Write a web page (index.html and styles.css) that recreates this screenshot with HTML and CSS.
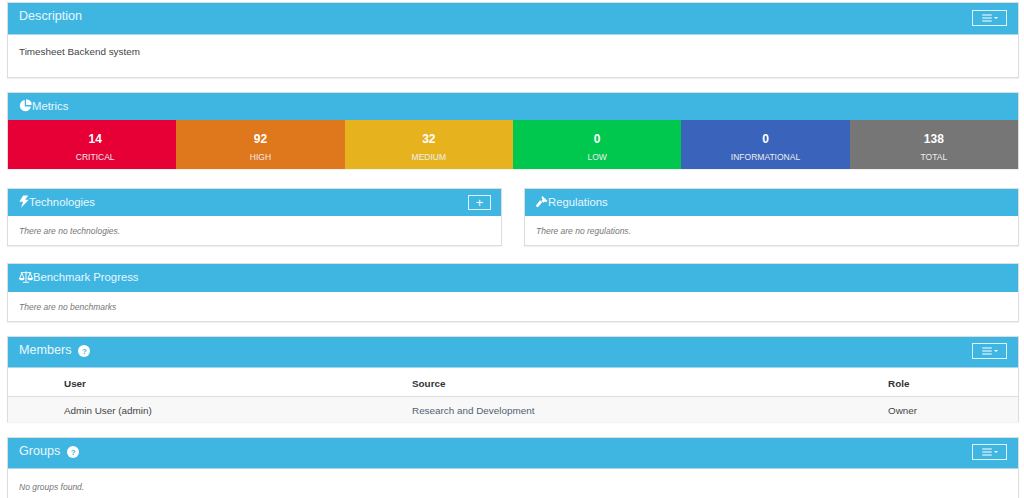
FILE: index.html
```html
<!DOCTYPE html>
<html lang="en">
<head>
<meta charset="utf-8">
<title>Timesheet Backend system</title>
<link rel="stylesheet" href="styles.css">
</head>
<body>
<svg class="sprite" width="0" height="0" aria-hidden="true">
  <symbol id="bars" viewBox="0 0 12 10"><path d="M0 0.5h12v1.4H0zM0 4.3h12v1.4H0zM0 8.1h12v1.4H0z" fill="currentColor"/></symbol>
</svg>
<main class="page">
  <section class="panel panel-description">
    <header class="heading heading-lg">
      <h2 class="title title-lg title-top">Description</h2>
      <button class="tool tool-menu" type="button"><svg class="bars"><use href="#bars"/></svg><span class="caret"></span></button>
    </header>
    <div class="body-description">Timesheet Backend system</div>
  </section>

  <section class="panel panel-metrics">
    <header class="heading heading-sm">
      <h3 class="title"><svg class="icon icon-pie" viewBox="0 0 14 14"><path d="M6.2 1.2A6 6 0 1 0 12.8 8H6.2z" fill="currentColor"/><path d="M7.6 0.2a6.2 6.2 0 0 1 6.2 6.2H7.6z" fill="currentColor"/></svg>Metrics</h3>
    </header>
    <div class="metrics">
      <div class="metric critical"><b>14</b><span>CRITICAL</span></div>
      <div class="metric high"><b>92</b><span>HIGH</span></div>
      <div class="metric medium"><b>32</b><span>MEDIUM</span></div>
      <div class="metric low"><b>0</b><span>LOW</span></div>
      <div class="metric info"><b>0</b><span>INFORMATIONAL</span></div>
      <div class="metric total"><b>138</b><span>TOTAL</span></div>
    </div>
  </section>

  <div class="split">
    <section class="panel">
      <header class="heading heading-sm">
        <h3 class="title"><svg class="icon icon-bolt" viewBox="0 0 11 14"><path d="M4.6 0.3h5.6L6.8 5h3.9L2.3 13.8 4.4 7.4H0.4z" fill="currentColor"/></svg>Technologies</h3>
        <button class="tool tool-add" type="button">+</button>
      </header>
      <p class="empty">There are no technologies.</p>
    </section>
    <section class="panel">
      <header class="heading heading-sm">
        <h3 class="title"><svg class="icon icon-gavel" viewBox="0 0 14 14"><path d="M7 0.4l6.4 5.6-1.8 1.9-1.2-1-1.5 1.6-2.7-2.4 1.5-1.7-1.2-1.1zM4.7 5.4l2.6 2.4L2.8 13a1.5 1.5 0 0 1-2.2-2.1z" fill="currentColor"/></svg>Regulations</h3>
      </header>
      <p class="empty">There are no regulations.</p>
    </section>
  </div>

  <section class="panel panel-bench">
    <header class="heading heading-sm">
      <h3 class="title"><svg class="icon icon-scale" viewBox="0 0 16 14"><path d="M2 2h12M8 .5v12M4.5 13h7M3.2 2.4.9 8.2M3.2 2.4l2.3 5.8M12.8 2.4l-2.3 5.8M12.8 2.4l2.3 5.8" fill="none" stroke="currentColor" stroke-width="1.1"/><path d="M0 8h6.4a3.2 2.8 0 0 1-6.4 0zM9.6 8H16a3.2 2.8 0 0 1-6.4 0z" fill="currentColor"/></svg>Benchmark Progress</h3>
    </header>
    <p class="empty">There are no benchmarks</p>
  </section>

  <section class="panel panel-members">
    <header class="heading heading-lg">
      <h2 class="title title-lg">Members <span class="help">?</span></h2>
      <button class="tool tool-menu" type="button"><svg class="bars"><use href="#bars"/></svg><span class="caret"></span></button>
    </header>
    <table class="table">
      <thead>
        <tr><th class="col-user">User</th><th class="col-source">Source</th><th>Role</th></tr>
      </thead>
      <tbody>
        <tr><td class="col-user">Admin User (admin)</td><td class="col-source"><a href="#">Research and Development</a></td><td>Owner</td></tr>
      </tbody>
    </table>
  </section>

  <section class="panel panel-groups">
    <header class="heading heading-lg">
      <h2 class="title title-lg">Groups <span class="help">?</span></h2>
      <button class="tool tool-menu" type="button"><svg class="bars"><use href="#bars"/></svg><span class="caret"></span></button>
    </header>
    <p class="empty empty-groups">No groups found.</p>
  </section>
</main>
</body>
</html>
```
FILE: styles.css
```css
* { box-sizing: border-box; }
html, body { margin: 0; height: 498px; overflow: hidden; background: #fff; }
body { font-family: "Liberation Sans", Arial, sans-serif; font-size: 10px; color: #444; }
.sprite { position: absolute; }
.page { padding: 2px 5px 0 7px; display: flex; flex-direction: column; }
.panel { background: #fff; border: 1px solid #ddd; box-shadow: 0 1px 1px rgba(0,0,0,.05); }
.heading { background: #3fb6e2; color: #fff; display: flex; align-items: center; justify-content: space-between; padding: 0 11px 0 11px; border-bottom: 1px solid #a8d7ec; }
.heading-lg { height: 32px; }
.heading-sm { height: 27px; border-bottom: 0; }
.title { margin: 0; font-size: 11.3px; font-weight: 400; display: flex; align-items: center; color: #e8f7fd; position: relative; top: -1px; }
.title-lg { font-size: 12.6px; top: -2px; }
.title-top { top: -3px; }
.icon { height: 13px; display: block; color: #fff; flex: none; }
.icon-pie { width: 13px; }
.icon-bolt { width: 10px; }
.icon-scale { width: 14px; height: 14px; }
.icon-gavel { width: 12px; }
.tool { border: 1.5px solid #dff3fb; background: transparent; color: #fff; padding: 0; margin: 0; display: flex; align-items: center; justify-content: center; font-family: inherit; position: relative; top: -1px; }
.tool-menu { width: 35px; height: 16px; gap: 2px; }
.tool-add { width: 23px; height: 15px; font-size: 13px; line-height: 1; margin-right: -1px; top: 0; }
.bars { width: 10px; height: 8px; color: #fff; }
.caret { width: 0; height: 0; border-left: 2.5px solid transparent; border-right: 2.5px solid transparent; border-top: 2.5px solid #fff; }
.panel-description { height: 76px; }
.body-description { padding: 11px 11px; font-size: 9.9px; line-height: 12px; }
.panel-metrics { margin-top: 14px; height: 77px; }
.metrics { display: grid; grid-template-columns: repeat(6, 1fr); height: 49px; }
.metric { display: flex; flex-direction: column; align-items: center; color: #fff; padding-top: 12px; }
.metric b { font-size: 12px; line-height: 15px; }
.metric span { font-size: 8.5px; line-height: 10px; margin-top: 5px; color: #eee; }
.critical { background: #e60035; padding-left: 6px; }
.high { background: #df771d; }
.medium { background: #e6b31f; }
.low { background: #00c84f; }
.info { background: #3a64bb; }
.total { background: #767676; }
.split { margin-top: 19px; display: grid; grid-template-columns: 495px 495px; justify-content: space-between; }
.split .panel { height: 58px; }
.empty { margin: 0; padding: 10px 11px; font-size: 8.5px; line-height: 11px; font-style: italic; color: #777; }
.panel-bench { margin-top: 17px; height: 59px; }
.panel-bench .heading-sm { height: 28px; }
.panel-members { margin-top: 14px; height: 86px; }
.panel-members .heading-lg { height: 31px; }
.table { width: 100%; border-collapse: collapse; font-size: 9.9px; table-layout: fixed; }
.table th { text-align: left; height: 28px; font-weight: 700; color: #333; border-bottom: 1px solid #ddd; padding: 3px 0 0; }
.table td { height: 26px; padding: 2px 0 0; background: #f8f8f8; }
.col-user { width: 404px; padding-left: 56px !important; }
.col-source { width: 476px; }
.table a { color: #4f6272; text-decoration: none; }
.help { display: inline-flex; width: 12px; height: 12px; border-radius: 50%; background: #fff; color: #3fb6e2; font-size: 8px; font-weight: 700; align-items: center; justify-content: center; margin-left: 7px; position: relative; top: 1px; }
.panel-groups { margin-top: 15px; height: 70px; }
.panel-groups .heading-lg { height: 31px; }
.empty-groups { padding: 13px 11px; }
```
